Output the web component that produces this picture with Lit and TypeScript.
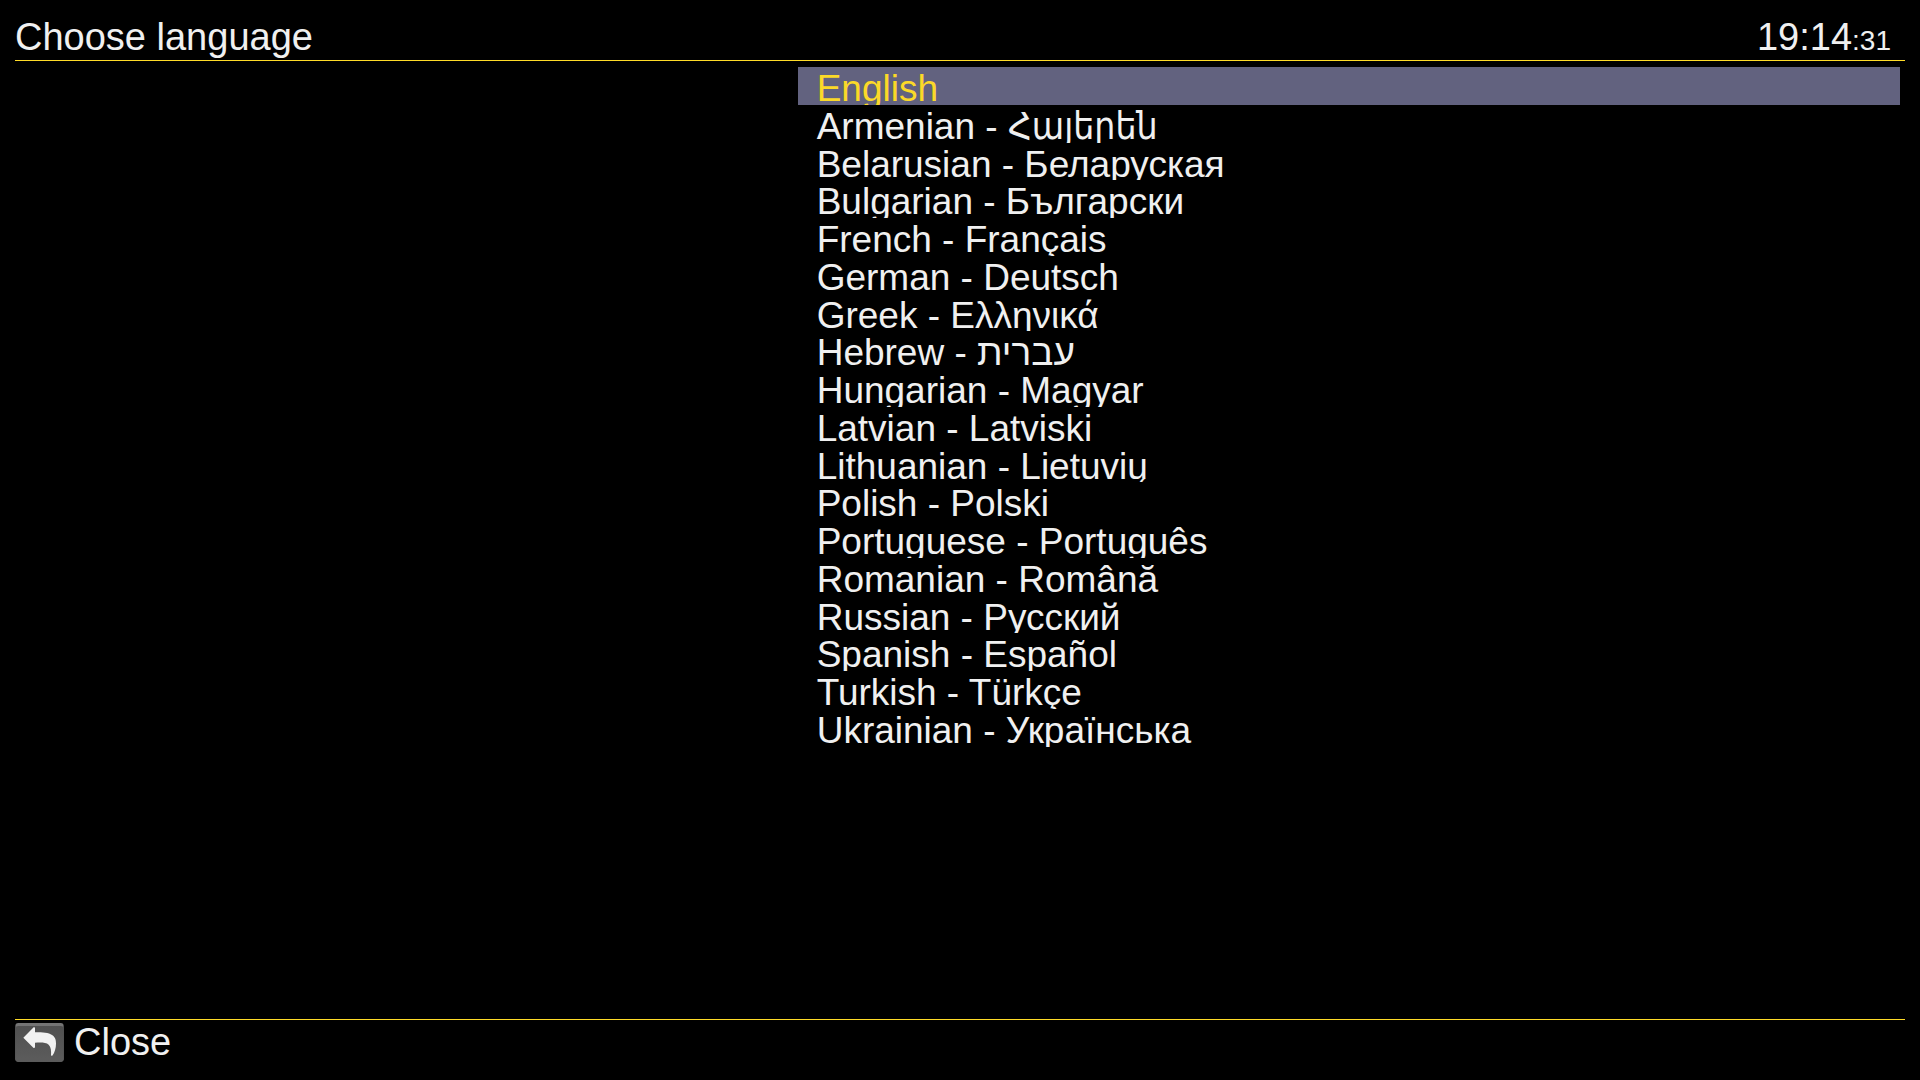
import { LitElement, html, css } from "lit";
import { customElement, state } from "lit/decorators.js";

const LANGUAGES: string[] = [
  "English",
  "Armenian - Հայերեն",
  "Belarusian - Беларуская",
  "Bulgarian - Български",
  "French - Français",
  "German - Deutsch",
  "Greek - Ελληνικά",
  "Hebrew - עברית",
  "Hungarian - Magyar",
  "Latvian - Latviski",
  "Lithuanian - Lietuvių",
  "Polish - Polski",
  "Portuguese - Português",
  "Romanian - Română",
  "Russian - Русский",
  "Spanish - Español",
  "Turkish - Türkçe",
  "Ukrainian - Українська",
];

@customElement("app-root")
export class AppRoot extends LitElement {
  static styles = css`
    :host {
      display: flex;
      flex-direction: column;
      box-sizing: border-box;
      height: 100vh;
      padding: 15px 15px 16px;
      background: #000;
      color: #f0f0f0;
      font-family: "Liberation Sans", "DejaVu Sans Condensed", "DejaVu Sans", sans-serif;
      font-size: 38px;
      line-height: 44px;
    }
    button {
      margin: 0;
      padding: 0;
      border: 0;
      background: none;
      color: inherit;
      font: inherit;
      text-align: left;
      cursor: pointer;
    }
    .header {
      display: flex;
      justify-content: space-between;
      padding-bottom: 1px;
      border-bottom: 1px solid #ffdc28;
    }
    .title {
      margin: 0;
      font: inherit;
    }
    .clock {
      padding-right: 14px;
    }
    .seconds {
      font-size: 28px;
      line-height: 1;
    }
    .main {
      flex: 1;
      min-height: 0;
      display: grid;
      grid-template-columns: 71fr 100fr;
      grid-template-rows: minmax(0, 1fr);
      padding: 6px 5px 8px 0;
    }
    /* One screen of the menu holds 25 rows. */
    .list {
      grid-column: 2;
      display: grid;
      grid-template-rows: repeat(25, minmax(0, 1fr));
      margin: 0;
      padding: 0;
      list-style: none;
      font-size: 37px;
      line-height: 44px;
    }
    .item {
      display: grid;
      grid-template-rows: minmax(0, 1fr);
      min-height: 0;
      overflow: hidden;
    }
    .language {
      display: flex;
      align-items: flex-start;
      min-height: 0;
      padding-left: 19px;
      overflow: hidden;
      white-space: nowrap;
      outline: none;
    }
    .language.selected {
      background: #62627f;
      color: #fbd928;
    }
    .footer {
      display: flex;
      border-top: 1px solid #ffdc28;
    }
    .close {
      display: flex;
      align-items: center;
      gap: 10px;
    }
    .key {
      display: block;
      width: 49px;
      height: 39px;
    }
  `;

  @state() private selected = 0;

  render() {
    return html`
      <header class="header">
        <h1 class="title">Choose language</h1>
        <time class="clock">19:14<span class="seconds">:31</span></time>
      </header>
      <main class="main">
        <ul class="list">
          ${LANGUAGES.map(
            (name, i) => html`<li class="item">
              <button
                type="button"
                class="language ${i === this.selected ? "selected" : ""}"
                @click=${() => (this.selected = i)}
              >${name}</button>
            </li>`
          )}
        </ul>
      </main>
      <footer class="footer">
        <button type="button" class="close">
          <svg class="key" viewBox="0 0 147 117" aria-hidden="true">
            <defs>
              <linearGradient id="face" x1="0" y1="0" x2="0" y2="1">
                <stop offset="0" stop-color="#505050" />
                <stop offset="1" stop-color="#5c5c5c" />
              </linearGradient>
            </defs>
            <rect x="1" y="0" width="145" height="116" rx="9" fill="#747474" />
            <path d="M1 17Q1 9 10 9H137Q146 9 146 17V107Q146 116 137 116H10Q1 116 1 107Z" fill="url(#face)" />
            <path
              d="M25 44L56 13Q60 11 60 16V28C84 28 101 29 111 36C121 42 123 51 123 62C123 75 119 88 113 97Q110 100 108 97C109 84 108 72 101 65C93 58 79 58 60 59V72Q59 77 55 74Z"
              fill="#f2f2f2"
            />
          </svg>
          <span>Close</span>
        </button>
      </footer>
    `;
  }
}
